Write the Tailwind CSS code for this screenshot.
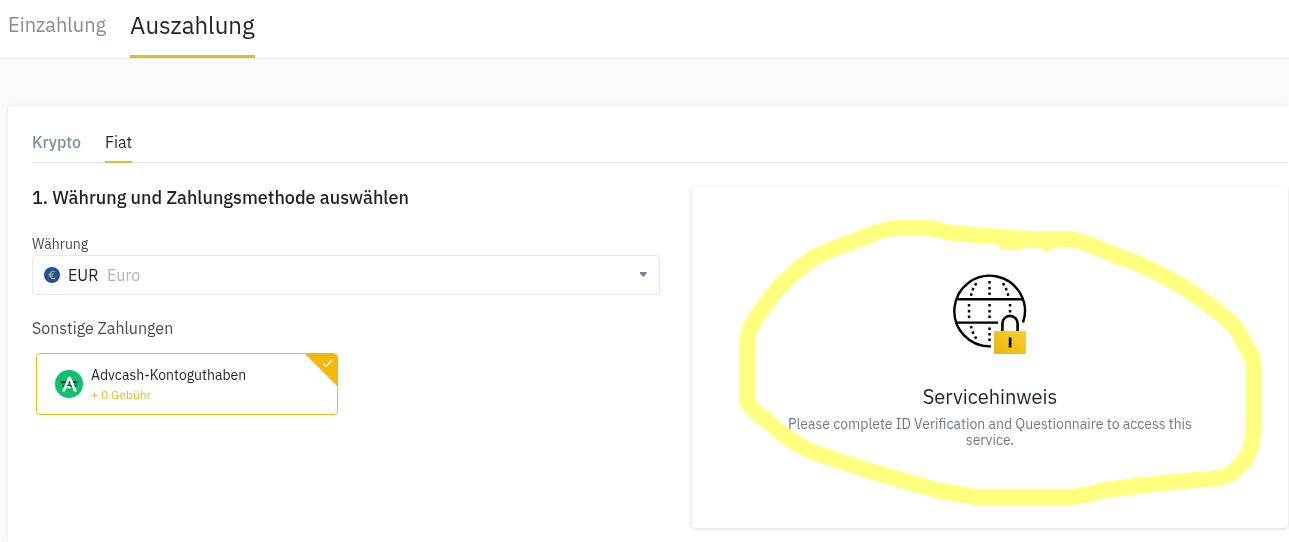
<!DOCTYPE html>
<html lang="de">
<head>
    <meta charset="UTF-8">
    <meta name="viewport" content="width=device-width, initial-scale=1.0">
    <title>Auszahlung</title>
    <script src="https://cdn.jsdelivr.net/npm/@tailwindcss/browser@4"></script>
</head>
<body class="flex min-h-screen flex-col overflow-x-hidden bg-[#fafafa] font-['IBM_Plex_Sans',Roboto,sans-serif] text-[#1e2329]">
    <!-- Hauptnavigation -->
    <nav class="flex gap-6 border-b border-[#e6e8ea] bg-white px-2">
        <a href="#einzahlung" class="pt-[9px] text-[20px] leading-8 text-[#848e9c]">Einzahlung</a>
        <a href="#auszahlung" class="border-b-3 border-[#e8b924] pt-[7px] pb-3 text-[24px] leading-9">Auszahlung</a>
    </nav>

    <main class="mt-[47px] ml-2 flex-1 rounded-tl bg-white pt-6 pr-px pl-6 shadow-[0_0_4px_rgba(0,0,0,0.08)]">
        <div class="flex gap-6 border-b border-[#e6e8ea] text-base leading-6">
            <a href="#krypto" class="pb-[7px] font-medium text-[#848e9c]">Krypto</a>
            <a href="#fiat" class="-mb-px border-b-2 border-[#e8b924] pb-[7px]">Fiat</a>
        </div>

        <div class="grid grid-cols-[628fr_596fr] items-start gap-8 pt-6">
            <form>
                <h1 class="text-[18px] leading-[22px] font-medium">1. Währung und Zahlungsmethode auswählen</h1>

                <label for="currency" class="mt-[25px] mb-px block text-sm leading-5 text-[#474d57]">Währung</label>
                <div class="relative">
                    <select id="currency" class="block h-10 w-full appearance-none rounded border border-[#e6e8ea] bg-white pl-[35px] text-base">
                        <option>EUR</option>
                    </select>
                    <div class="pointer-events-none absolute inset-y-0 left-3 flex items-center">
                        <svg class="size-4" viewBox="0 0 16 16">
                            <circle cx="8" cy="8" r="8" fill="#1f4fa0"/>
                            <path d="M11 5C8.500 3.200 6 5 6 8s2.500 4.800 5 3M4.500 7.200h5M4.500 9h4.500" fill="none" stroke="#b8b06a" stroke-width="1.200"/>
                        </svg>
                        <span class="ml-[47px] text-base text-[#aeb4bc]">Euro</span>
                    </div>
                    <svg class="pointer-events-none absolute top-[17px] right-[13px] h-[5px] w-2" viewBox="0 0 8 5">
                        <path d="M1 0h6.500v1.500L4.200 5 1 1.500z" fill="#76808f"/>
                    </svg>
                </div>

                <h2 class="mt-[21px] text-base leading-6 text-[#474d57]">Sonstige Zahlungen</h2>
                <label class="relative mt-[13px] ml-1 flex h-[62px] w-full max-w-[302px] items-center gap-2 overflow-hidden rounded border border-[#f0b90b] pl-[18px]">
                    <input type="radio" name="method" checked class="sr-only">
                    <svg class="size-7 shrink-0" viewBox="0 0 28 28">
                        <circle cx="14" cy="14" r="14" fill="#0fc06d"/>
                        <path d="M5 11.200h18L21.800 13.200H6.400zM7 14.800h15l-1.200 2H8.400z" fill="#17363b"/>
                        <path d="M13.200 6.800h2.600l6.200 14.700h-3l-4.600-10.900-2.300 5.400h3l1 2.300h-5l-1.300 3.200H7z" fill="#fff"/>
                    </svg>
                    <span class="pt-0.5">
                        <span class="block text-sm leading-5">Advcash-Kontoguthaben</span>
                        <span class="block text-xs leading-5 text-[#f0b90b]">+ 0 Gebühr</span>
                    </span>
                    <svg class="absolute top-0 right-0 size-8" viewBox="0 0 32 32">
                        <path d="M0 0h32v32z" fill="#f0b90b"/>
                        <path d="M18 9.500l3 3 6-6.500" fill="none" stroke="#fff" stroke-width="1.200"/>
                    </svg>
                </label>
            </form>

            <section class="relative flex flex-col items-center rounded bg-white px-20 pt-[85px] pb-20 text-center shadow-[0_1px_4px_rgba(0,0,0,0.16)]">
                <svg class="h-[84px] w-20 shrink-0" viewBox="0 0 80 84">
                    <g fill="none" stroke="#000" stroke-width="2.400">
                        <path d="M41 74.300A35.300 35.300 0 1 1 73 50.500M7 27.300h66M7 50.600h41"/>
                    </g>
                    <g fill="#000">
                        <path d="M38.300 9h2.500v2.500h-2.500zM38.300 15h2.500v2.500h-2.500zM38.300 20.500h2.500v2.500h-2.500zM38.300 32h2.500v2.500h-2.500zM38.300 38h2.500v2.500h-2.500zM38.300 43.500h2.500v2.500h-2.500zM38.300 55.500h2.500v2.500h-2.500zM38.300 61h2.500v2.500h-2.500zM38.300 66.500h2.500v2.500h-2.500z"/>
                        <path d="M17.800 32h2.500v2.500h-2.500zM17.800 38h2.500v2.500h-2.500zM17.800 43.500h2.500v2.500h-2.500zM58.800 32h2.500v2.500h-2.500zM58.800 38h2.500v2.500h-2.500z"/>
                        <path d="M25 10.600l2.300 1-1 2.300-2.300-1zM22.300 15.600l2.300.9-.9 2.300-2.300-.9zM20.400 21l2.400.7-.7 2.400-2.400-.7zM54.200 10.600l-2.300 1 1 2.300 2.300-1zM56.900 15.600l-2.300.9.900 2.300 2.300-.9zM58.800 21l-2.400.7.700 2.400 2.400-.7zM20.400 56.800l2.400-.7-.7-2.400-2.400.7zM22.300 62.300l2.300-.9-.9-2.300-2.300.9zM25 67.200l2.300-1-1-2.300-2.300 1z"/>
                    </g>
                    <defs>
                        <linearGradient id="lock" x1="0" y1="1" x2="1" y2="0">
                            <stop stop-color="#edb40b"/>
                            <stop offset="1" stop-color="#f8d12f"/>
                        </linearGradient>
                    </defs>
                    <path d="M52.400 60v-8.500a7.600 7.600 0 0 1 15.200 0V60" fill="none" stroke="#000" stroke-width="2.600"/>
                    <path d="M44 59h32v23H44z" fill="url(#lock)"/>
                    <path d="M58.800 65.500h2.600v10h-2.600z"/>
                </svg>
                <h2 class="mt-[25px] text-[20px] leading-8">Servicehinweis</h2>
                <p class="mt-[3px] text-sm leading-4 text-[#707a8a]">Please complete ID Verification and Questionnaire to access this service.</p>

                <!-- Markierung -->
                <svg class="pointer-events-none absolute inset-0 size-full mix-blend-multiply" viewBox="0 1 596 341">
                    <path d="M322 54L308 51 260 47 238 42H207Q190 43 178 49L138 64Q120 71 108 82 92 95 82 107L64 132Q55 145 55 159V214Q57 220 64 226L93 250Q109 261 123 267L178 285 248 305 283 311H378L394 309 412 304 470 297 528 292Q538 290 546 281 557 275 561 249L562 240V179Q560 168 553 159 544 138 530 129 502 107 488 99 449 77 428 71 385 53 378 53H338L308 51" fill="none" stroke="#ffff80" stroke-width="16" stroke-linejoin="round"/>
                    <path d="M308 52V64H326Q338 60 350 63L356 67 362 61V52z" fill="#ffff80"/>
                </svg>
            </section>
        </div>
    </main>
</body>
</html>
